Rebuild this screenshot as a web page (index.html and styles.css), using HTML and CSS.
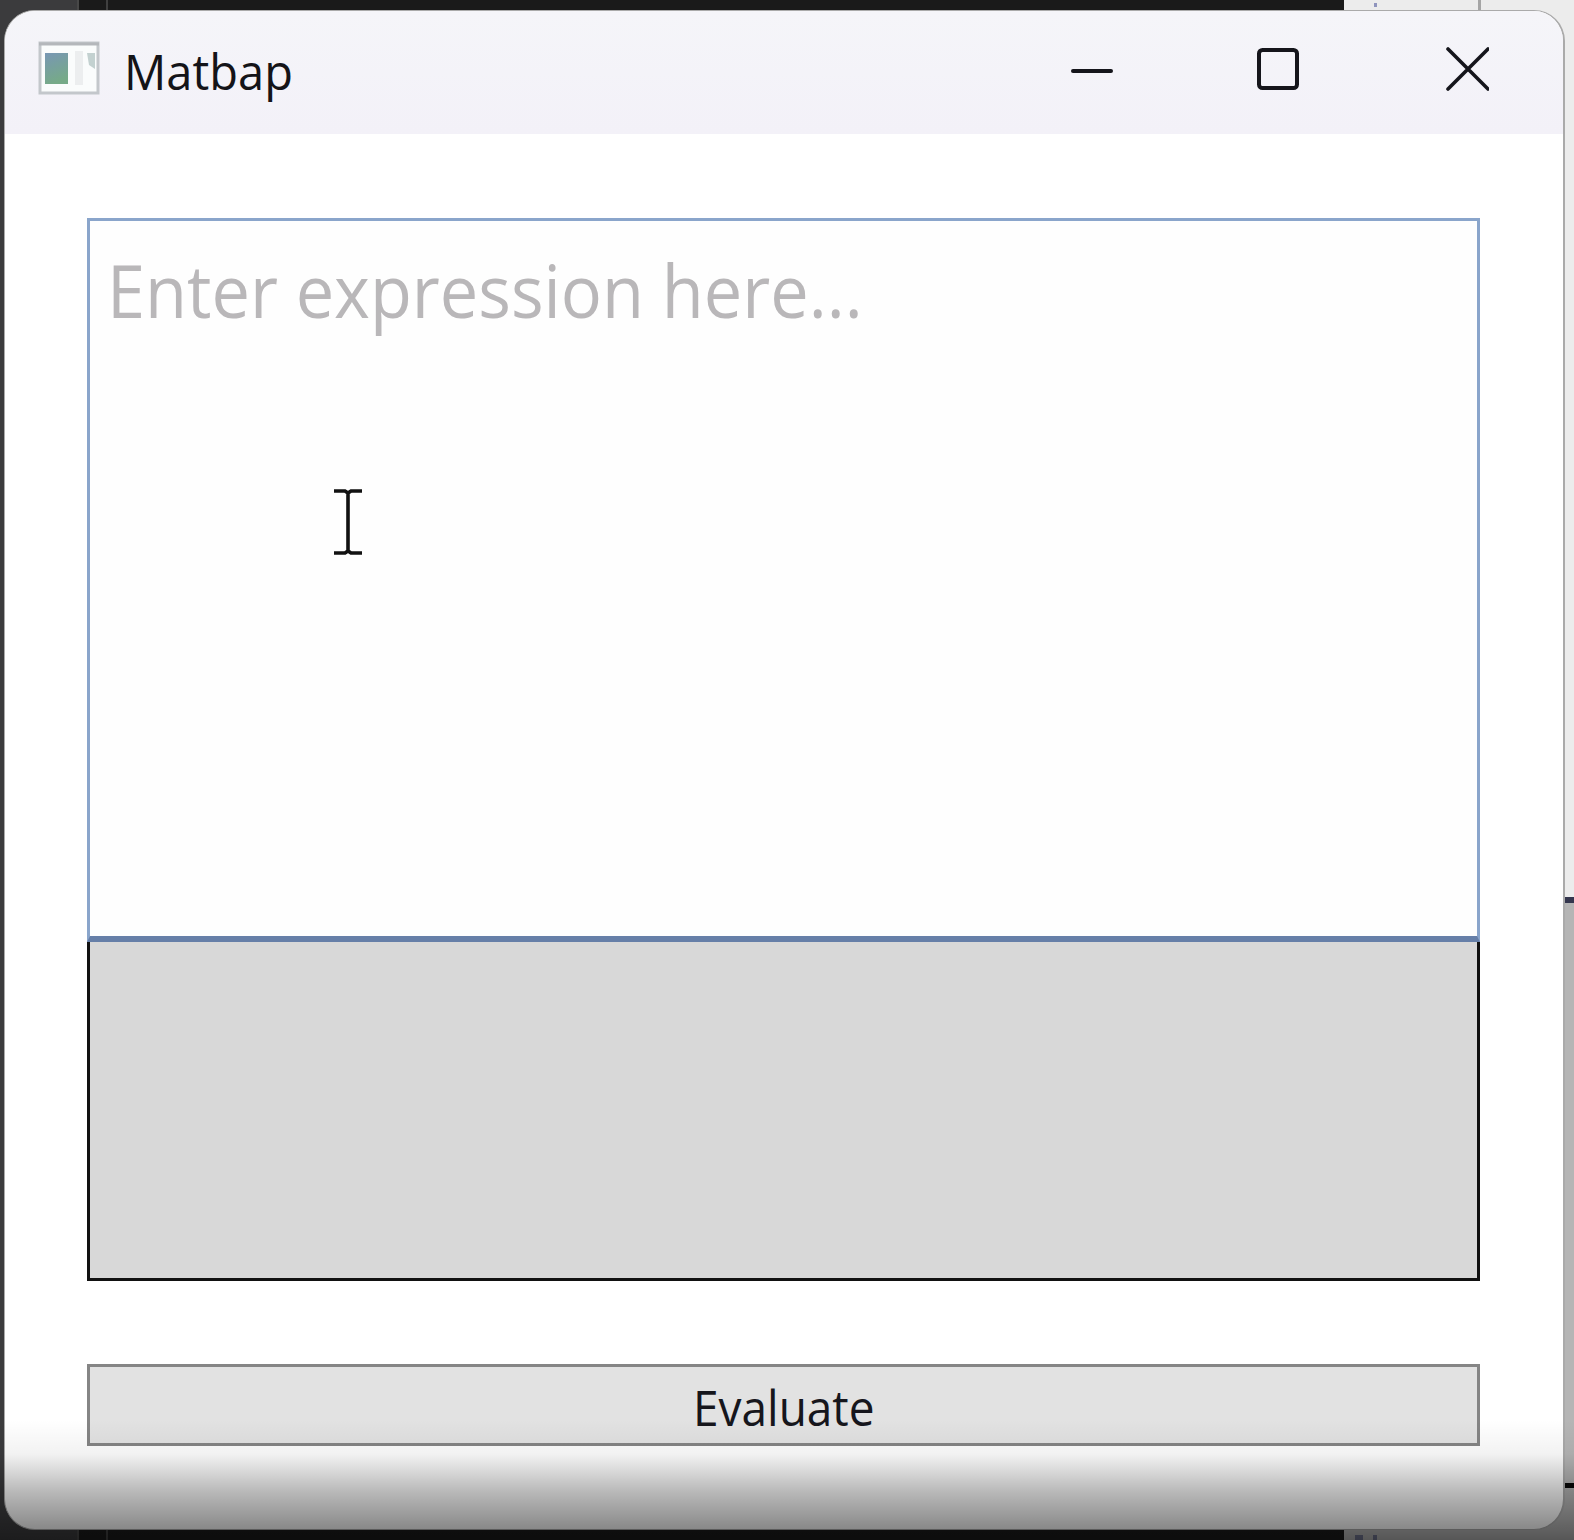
FILE: index.html
```html
<!DOCTYPE html>
<html lang="en">
<head>
<meta charset="utf-8">
<title>Matbap</title>
<link rel="stylesheet" href="styles.css">
</head>
<body>
<div class="desktop">
  <div class="back-top"></div>
  <div class="back-right"></div>
  <div class="back-panel"></div>
  <div class="back-footer"></div>
  <div class="back-mark"></div>
  <div class="back-mark low"></div>
  <main class="window">
    <header class="titlebar">
      <svg class="app-icon" width="64" height="56" viewBox="0 0 64 56">
        <defs><linearGradient id="g" x1="0" y1="0" x2=".3" y2="1"><stop offset="0" stop-color="#7897b4"/><stop offset="1" stop-color="#76aa88"/></linearGradient></defs>
        <rect x="2" y="2" width="58" height="50" fill="#fafcfc" stroke="#c3c7cb" stroke-width="3"/>
        <path d="M1 3H61" stroke="#b4b7bb" stroke-width="3"/>
        <rect x="7" y="12" width="23" height="31" fill="url(#g)"/>
        <rect x="37" y="10" width="8" height="34" fill="#eceeef"/>
        <path d="M49 12H57V28L51 24Z" fill="#c3d1d0"/>
      </svg>
      <h1 class="title">Matbap</h1>
      <div class="controls">
        <svg width="44" height="44" viewBox="0 0 44 44"><path d="M4 24H42" class="stroke"/></svg>
        <svg width="44" height="44" viewBox="0 0 44 44"><rect x="2" y="3" width="38" height="38" rx="3.5" class="stroke"/></svg>
        <svg width="44" height="44" viewBox="0 0 44 44"><path d="M3 2L43 42M43 2L3 42" class="stroke thin"/></svg>
      </div>
    </header>
    <section class="content">
      <div class="expression"><span class="placeholder">Enter expression here...</span></div>
      <div class="result"></div>
      <button class="evaluate"><span class="label">Evaluate</span></button>
    </section>
  </main>
  <svg class="caret" width="30" height="68" viewBox="0 0 30 68"><path d="M1 3H12L15 5L18 3H29M15 5V63M1 65H12L15 63L18 65H29"/></svg>
  <div class="shade"></div>
</div>
</body>
</html>
```
FILE: styles.css
```css
* { box-sizing: border-box; }
body { margin: 0; font-family: "Open Sans", "Noto Sans", sans-serif; }
.desktop { position: relative; width: 1574px; height: 1540px; overflow: hidden; background: #3b3b3d; }
.back-top { position: absolute; left: 77px; top: 0; width: 1267px; height: 1540px; background: linear-gradient(90deg, #1a1a1a 27px, #404040 27px, #404040 29px, #1a1a1a 29px); border-left: 2px solid #484848; }
.back-right { position: absolute; left: 1344px; top: 0; width: 230px; height: 1540px; background: linear-gradient(90deg, #ececec 134px, #a5a5a5 134px, #a5a5a5 137px, #ececec 137px); }
.back-panel { position: absolute; left: 1500px; top: 897px; width: 74px; height: 643px; background: #b5b5b5; border-top: 6px solid #34364e; }
.back-footer { position: absolute; left: 1344px; top: 1483px; width: 230px; height: 57px; background: #b5b5b5; border-top: 5px solid #080808; }
.back-mark { position: absolute; left: 1374px; top: 3px; width: 3px; height: 4px; background: #8f94bd; }
.back-mark.low { left: 1355px; top: 1535px; width: 22px; height: 5px; background: linear-gradient(90deg, #70748f 8px, transparent 8px, transparent 18px, #70748f 18px); }
.window { position: absolute; left: 4px; top: 10px; width: 1561px; height: 1520px; display: flex; flex-direction: column; background: #fff; border: 1px solid #aaa; border-right-width: 2px; border-radius: 31px; overflow: hidden; }
.titlebar { height: 123px; display: flex; align-items: flex-start; padding: 30px 0 0 33px; background: linear-gradient(180deg, #f5f5f9, #f3f1f8); }
.app-icon { flex: none; }
.title { margin: -3px 0 0 22px; font-size: 48.5px; line-height: 67px; font-weight: 400; color: #141418; transform-origin: 0 50%; transform: scaleX(.97); }
.controls { margin-left: auto; padding: 6px 74px 0 0; display: flex; gap: 144px; }
.stroke { fill: none; stroke: #15151b; stroke-width: 4; stroke-linecap: round; }
.thin { stroke-width: 3.6; }
.content { flex: 1; display: flex; flex-direction: column; padding: 84px 83px 0 82px; }
.expression { height: 724px; padding: 16px 17px; background: #fefefe; border: 3px solid #8aa5cb; border-bottom: 6px solid #667fa8; }
.placeholder { display: inline-block; white-space: nowrap; font-size: 73px; line-height: 105px; color: #b9b7b9; transform-origin: 0 50%; transform: scaleX(.938); }
.result { height: 339px; background: #d8d8d8; border: 3px solid #111; border-top: 0; }
.evaluate { height: 82px; margin-top: 83px; padding: 4px 0 0; background: #e2e2e2; border: 3px solid #858585; border-radius: 0; font: 49px/70px "Open Sans", "Noto Sans", sans-serif; color: #16161c; }
.label { display: inline-block; transform: scaleX(.938); }
.caret { position: absolute; left: 333px; top: 488px; fill: none; stroke: #111; stroke-width: 3.6; }
.shade { position: absolute; left: 0; top: 1420px; width: 100%; height: 120px; background: linear-gradient(180deg, rgba(0,0,0,0) 0, rgba(0,0,0,.05) 34px, rgba(0,0,0,.17) 54px, rgba(0,0,0,.28) 72px, rgba(0,0,0,.46) 108px, rgba(0,0,0,.52) 120px); }
```
